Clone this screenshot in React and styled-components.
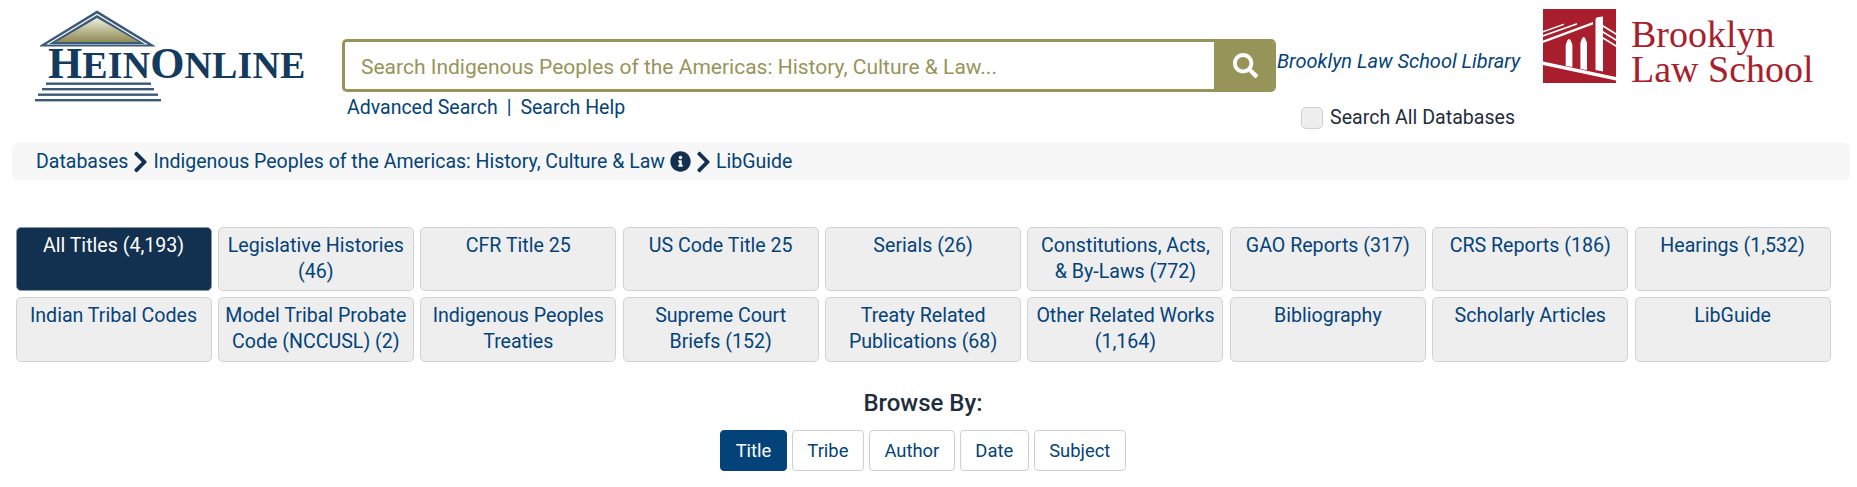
import React from "react";
import styled, { createGlobalStyle } from "styled-components";
import { FaSearch, FaChevronRight, FaInfoCircle } from "react-icons/fa";

const GlobalStyle = createGlobalStyle`
  body {
    margin: 0;
    background: #fff;
    font-family: Roboto, "Liberation Sans", sans-serif;
    color: #1f2d3d;
  }
`;

const navy = "#03437a";
const olive = "#979459";

const Page = styled.div`
  width: 1857px;
  height: 487px;
  overflow: hidden;
`;

const Header = styled.header`
  display: flex;
  height: 143px;
`;

const HeinLogo = styled.div`
  width: 342px;
  flex: none;
  padding: 10px 0 0 35px;
  box-sizing: border-box;
`;

const HeinWord = styled.div`
  font-family: "Liberation Serif", serif;
  font-weight: 700;
  font-size: 38px;
  letter-spacing: 0.1px;
  line-height: 34px;
  height: 34px;
  color: #143a5e;
  margin-left: 13px;
  white-space: nowrap;
  span {
    font-size: 44px;
  }
`;

const LogoRoof = styled.svg`
  display: block;
  margin-left: 5px;
`;

const LogoSteps = styled.svg`
  display: block;
`;

const SearchColumn = styled.div`
  width: 934px;
  flex: none;
  padding-top: 39px;
`;

const SearchBar = styled.div`
  display: flex;
  height: 53px;
  box-sizing: border-box;
  border: 3px solid ${olive};
  border-right: none;
  border-radius: 5px;
  overflow: hidden;
`;

const SearchInput = styled.input`
  flex: 1;
  min-width: 0;
  border: none;
  outline: none;
  padding: 2px 16px 0;
  font-family: inherit;
  font-size: 21px;
  &::placeholder {
    color: ${olive};
    opacity: 1;
  }
`;

const SearchButton = styled.button`
  width: 62px;
  border: none;
  padding: 0;
  margin: -3px 0;
  background: ${olive};
  color: #fff;
  display: flex;
  align-items: center;
  justify-content: center;
  font-size: 25px;
`;

const SearchLinks = styled.div`
  display: flex;
  gap: 9px;
  padding: 3px 0 0 5px;
  font-size: 19.5px;
  line-height: 26px;
  color: ${navy};
`;

const AccountColumn = styled.div`
  width: 267px;
  flex: none;
  padding-top: 48px;
`;

const LibraryName = styled.div`
  font-size: 20px;
  line-height: 26px;
  font-style: italic;
  color: ${navy};
  white-space: nowrap;
  padding-left: 1px;
`;

const CheckRow = styled.label`
  display: flex;
  align-items: center;
  gap: 7px;
  margin: 33px 0 0 25px;
  font-size: 19.6px;
  line-height: 22px;
  color: #1f2d3d;
`;

const CheckBox = styled.span`
  width: 22px;
  height: 22px;
  box-sizing: border-box;
  border: 1px solid #cfcfcf;
  border-radius: 5px;
  background: #eee;
`;

const SchoolLogo = styled.div`
  display: flex;
  gap: 15px;
  padding-top: 9px;
  height: 74px;
`;

const SchoolMark = styled.svg`
  display: block;
`;

const SchoolName = styled.div`
  font-family: "Liberation Serif", serif;
  font-size: 38px;
  line-height: 35px;
  color: #a91e2d;
  padding-top: 8px;
  white-space: nowrap;
`;

const Breadcrumb = styled.nav`
  display: flex;
  align-items: center;
  height: 37px;
  margin: 0 7px 0 12px;
  padding-left: 24px;
  background: #f7f7f7;
  border-radius: 6px;
  font-size: 19.5px;
  color: ${navy};
  gap: 5px;
`;

const Chevron = styled(FaChevronRight)`
  width: 15px;
  height: 24px;
  color: #12304f;
`;

const InfoIcon = styled(FaInfoCircle)`
  font-size: 21px;
  color: #12304f;
`;

const TabGrid = styled.div`
  display: grid;
  grid-template-columns: repeat(9, 196px);
  grid-template-rows: 64px 65px;
  column-gap: 6.4px;
  row-gap: 6px;
  margin: 47px 0 0 15.5px;
`;

const Tab = styled.div`
  box-sizing: border-box;
  padding: 5px 5px 0;
  border: 1px solid ${(p) => (p.$active ? "#8a98a8" : "#d2d2d2")};
  border-radius: 5px;
  background: ${(p) => (p.$active ? "#12304f" : "#eee")};
  color: ${(p) => (p.$active ? "#fff" : navy)};
  font-size: 19.6px;
  line-height: 25.6px;
  text-align: center;
`;

const BrowseTitle = styled.div`
  margin: 27px 11px 0 0;
  font-size: 24px;
  font-weight: 500;
  line-height: 28px;
  text-align: center;
  color: #1f2d3d;
`;

const BrowseRow = styled.div`
  display: flex;
  justify-content: center;
  gap: 5px;
  margin: 13px 11px 0 0;
`;

const BrowseButton = styled.div`
  box-sizing: border-box;
  height: 41px;
  display: flex;
  align-items: center;
  padding: 0 14.5px;
  border: 1px solid ${(p) => (p.$active ? navy : "#cfcfcf")};
  border-radius: 4px;
  background: ${(p) => (p.$active ? navy : "#fff")};
  color: ${(p) => (p.$active ? "#fff" : navy)};
  font-size: 18.4px;
`;

const tabs = [
  "All Titles (4,193)",
  "Legislative Histories (46)",
  "CFR Title 25",
  "US Code Title 25",
  "Serials (26)",
  "Constitutions, Acts, & By-Laws (772)",
  "GAO Reports (317)",
  "CRS Reports (186)",
  "Hearings (1,532)",
  "Indian Tribal Codes",
  "Model Tribal Probate Code (NCCUSL) (2)",
  "Indigenous Peoples Treaties",
  "Supreme Court Briefs (152)",
  "Treaty Related Publications (68)",
  "Other Related Works (1,164)",
  "Bibliography",
  "Scholarly Articles",
  "LibGuide",
];

const browseOptions = ["Title", "Tribe", "Author", "Date", "Subject"];

function App() {
  return (
    <Page>
      <GlobalStyle />
      <Header>
        <HeinLogo>
          <LogoRoof width="116" height="37" viewBox="0 0 116 37">
            <defs>
              <linearGradient id="roofFill" x1="0" y1="0" x2="0" y2="1">
                <stop offset="0" stopColor="#eeeee2" />
                <stop offset="0.5" stopColor="#bdbb95" />
                <stop offset="1" stopColor="#8f8c56" />
              </linearGradient>
            </defs>
            <path d="M57 0.5 L116 36.5 L0 36.5 L0 35.5 Z" fill="#3b5a79" />
            <path d="M57 3.5 L108 34.5 L6 34.5 Z" fill="#fff" />
            <path d="M57 5 L105 34 L9 34 Z" fill="#3b5a79" />
            <path d="M57 8 L99 32 L16 32 Z" fill="url(#roofFill)" />
          </LogoRoof>
          <HeinWord><span>H</span>EIN<span>O</span>NLINE</HeinWord>
          <LogoSteps width="126" height="21" viewBox="0 0 126 21">
            <rect x="11" y="1.5" width="105" height="2.4" fill="#3b5a79" />
            <rect x="7" y="7" width="112" height="2.4" fill="#3b5a79" />
            <rect x="3" y="12.5" width="120" height="2.4" fill="#3b5a79" />
            <rect x="0" y="18" width="126" height="2.4" fill="#3b5a79" />
          </LogoSteps>
        </HeinLogo>
        <SearchColumn>
          <SearchBar>
            <SearchInput placeholder="Search Indigenous Peoples of the Americas: History, Culture & Law..." />
            <SearchButton aria-label="Search"><FaSearch /></SearchButton>
          </SearchBar>
          <SearchLinks>
            <span>Advanced Search</span>
            <span>|</span>
            <span>Search Help</span>
          </SearchLinks>
        </SearchColumn>
        <AccountColumn>
          <LibraryName>Brooklyn Law School Library</LibraryName>
          <CheckRow><CheckBox />Search All Databases</CheckRow>
        </AccountColumn>
        <SchoolLogo>
          <SchoolMark width="73" height="74" viewBox="0 0 73 74">
            <rect width="73" height="74" fill="#a91e2d" />
            <path d="M0 22 L21 14.5 L21 16 L0 23.5 Z M0 26 L34 14 L34 15.8 L0 27.8 Z M0 31.5 L50 13 L50 15.5 L0 34 Z" fill="#fff" />
            <path d="M52.5 10 Q53 8 56 8 L60 7.5 L60 62.5 L52.5 61 Z" fill="#fff" />
            <path d="M60 16 L73 24 L73 26 L60 18 Z M60 22 L73 30 L73 32 L60 24 Z M60 28 L73 36 L73 38 L60 30 Z" fill="#fff" />
            <path d="M22.7 57 L22.7 36 Q26 24 29.4 36 L29.4 58 Z M37.4 60 L37.4 34 Q40.7 22 44 34 L44 61 Z" fill="#fff" />
            <path d="M0 52.5 L73 68 L73 71.5 L0 56 Z" fill="#fff" />
          </SchoolMark>
          <SchoolName>Brooklyn<br />Law School</SchoolName>
        </SchoolLogo>
      </Header>

      <Breadcrumb>
        <span>Databases</span>
        <Chevron />
        <span>Indigenous Peoples of the Americas: History, Culture &amp; Law</span>
        <InfoIcon />
        <Chevron />
        <span>LibGuide</span>
      </Breadcrumb>

      <TabGrid>
        {tabs.map((label, i) => (
          <Tab key={label} $active={i === 0}>{label}</Tab>
        ))}
      </TabGrid>

      <BrowseTitle>Browse By:</BrowseTitle>
      <BrowseRow>
        {browseOptions.map((label, i) => (
          <BrowseButton key={label} $active={i === 0}>{label}</BrowseButton>
        ))}
      </BrowseRow>
    </Page>
  );
}

export default App;
